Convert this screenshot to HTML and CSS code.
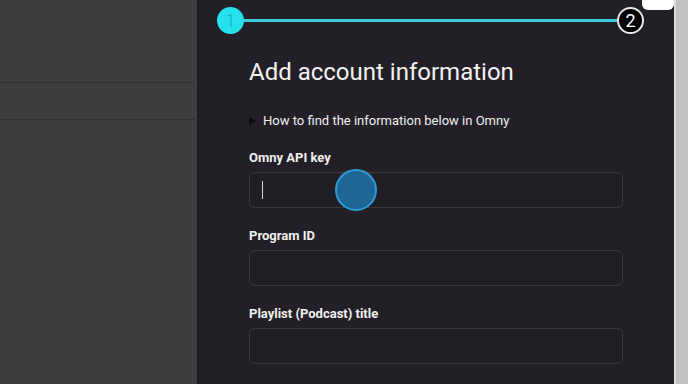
FILE: index.html
```html
<!DOCTYPE html>
<html lang="en">
<head>
    <meta charset="UTF-8">
    <meta name="viewport" content="width=device-width, initial-scale=1.0">
    <title>Add account information</title>
    <link rel="stylesheet" href="styles.css">
</head>
<body>

    <!-- Sidebar kiri -->
    <div class="sidebar">
        <div class="side-row side-top"></div>
        <div class="side-row"></div>
        <div class="side-row side-rest"></div>
    </div>

    <div class="panel">
        <div class="corner-btn"></div>

        <!-- Stepper -->
        <div class="stepper">
            <span class="step step-active">1</span>
            <span class="step-line"></span>
            <span class="step step-next">2</span>
        </div>

        <div class="content">
            <h1>Add account information</h1>

            <details class="help">
                <summary>How to find the information below in Omny</summary>
            </details>

            <div class="field">
                <label for="apikey">Omny API key</label>
                <div class="input-wrap">
                    <input id="apikey" type="text">
                    <span class="caret"></span>
                    <span class="click-dot"></span>
                </div>
            </div>

            <div class="field">
                <label for="programid">Program ID</label>
                <div class="input-wrap">
                    <input id="programid" type="text">
                </div>
            </div>

            <div class="field">
                <label for="playlist">Playlist (Podcast) title</label>
                <div class="input-wrap">
                    <input id="playlist" type="text">
                </div>
            </div>
        </div>
    </div>

    <div class="scrollbar"></div>

</body>
</html>
```

FILE: styles.css
```css
/* Reset */
* {
    margin: 0;
    padding: 0;
    box-sizing: border-box;
}

body {
    display: flex;
    height: 100vh;
    overflow: hidden;
    background: #221f26;
    font-family: Roboto, "Liberation Sans", sans-serif;
    color: #f0f0f0;
}

/* Sidebar */
.sidebar {
    width: 199px;
    flex-shrink: 0;
    display: flex;
    flex-direction: column;
    background: #3d3c3e;
    border-right: 2px solid #1d1b1f;
}

.side-row {
    height: 37px;
    margin-right: 2px;
    border-bottom: 1px solid #2f2e30;
}

.side-top {
    height: 83px;
}

.side-rest {
    flex: 1;
    border-bottom: none;
}

/* Panel kanan */
.panel {
    position: relative;
    flex: 1;
    background: #221f26;
}

.corner-btn {
    position: absolute;
    top: -6px;
    right: 0;
    width: 32px;
    height: 16px;
    background: #fff;
    border-radius: 6px;
}

.stepper {
    display: flex;
    align-items: center;
    margin: 7px 0 0 18px;
    width: 427px;
}

.step {
    width: 27px;
    height: 27px;
    border-radius: 50%;
    display: flex;
    align-items: center;
    justify-content: center;
    font-size: 18px;
    flex-shrink: 0;
}

.step-active {
    background: #25e1ee;
    color: #17aebb;
    font-weight: 300;
}

.step-next {
    background: #000;
    border: 2px solid #e8e8e8;
    color: #fff;
}

.step-line {
    flex: 1;
    height: 3px;
    background: #3fcbdb;
}

.content {
    padding: 0 51px 0 50px;
}

h1 {
    margin-top: 23px;
    font-size: 24px;
    font-weight: 400;
    line-height: 30px;
    color: #f2f2f2;
}

.help {
    margin-top: 26px;
    font-size: 13px;
}

.help summary {
    cursor: pointer;
    list-style: none;
    display: flex;
    align-items: center;
    gap: 7px;
}

.help summary::before {
    content: "";
    border-left: 7px solid #0c0b0d;
    border-top: 4px solid transparent;
    border-bottom: 4px solid transparent;
}

.field {
    margin-top: 22px;
}

.field + .field {
    margin-top: 20px;
}

label {
    display: block;
    font-size: 13px;
    font-weight: 700;
    line-height: 16px;
    margin-bottom: 6px;
}

.input-wrap {
    position: relative;
}

input {
    display: block;
    width: 100%;
    height: 36px;
    background: #211e25;
    border: 1px solid #3a3741;
    border-radius: 6px;
    outline: none;
    color: #f0f0f0;
}

.caret {
    position: absolute;
    left: 13px;
    top: 9px;
    width: 1px;
    height: 18px;
    background: #d8d8d8;
}

.click-dot {
    position: absolute;
    left: 86px;
    top: -3px;
    width: 42px;
    height: 42px;
    border-radius: 50%;
    background: rgba(30, 110, 160, 0.9);
    border: 2px solid #2b9cd8;
}

.scrollbar {
    width: 14px;
    flex-shrink: 0;
    background: #c2c2c2;
    border-left: 2px solid #dcdcdc;
}
```
